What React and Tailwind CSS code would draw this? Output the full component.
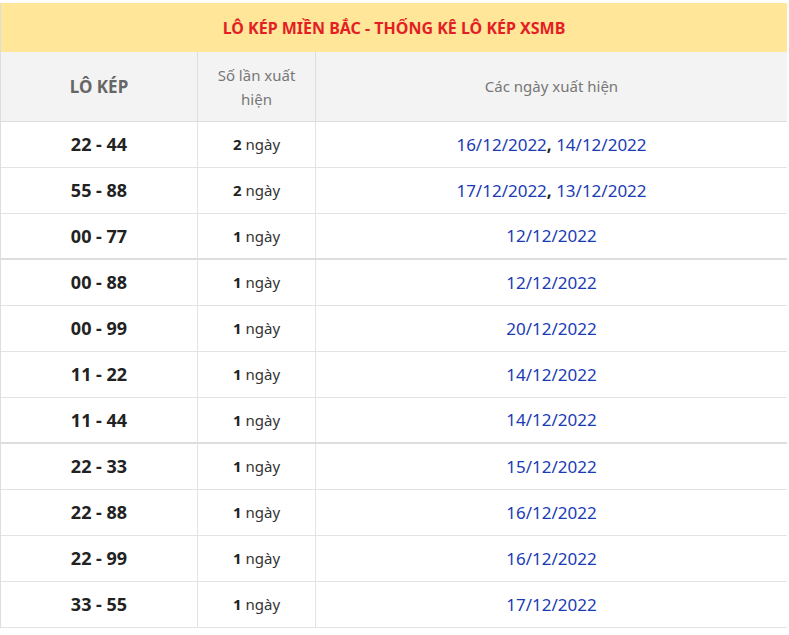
const ROWS = [
  ['22 - 44', 2, ['16/12/2022', '14/12/2022']],
  ['55 - 88', 2, ['17/12/2022', '13/12/2022']],
  ['00 - 77', 1, ['12/12/2022']],
  ['00 - 88', 1, ['12/12/2022']],
  ['00 - 99', 1, ['20/12/2022']],
  ['11 - 22', 1, ['14/12/2022']],
  ['11 - 44', 1, ['14/12/2022']],
  ['22 - 33', 1, ['15/12/2022']],
  ['22 - 88', 1, ['16/12/2022']],
  ['22 - 99', 1, ['16/12/2022']],
  ['33 - 55', 1, ['17/12/2022']],
]

export default function App() {
  return (
    <div className="w-[789px] h-[635px] bg-white pt-[3px] font-['Liberation_Sans',Arial,sans-serif] overflow-hidden">
      <div className="w-[787px] border-l border-[#ddd]">
        <div className="h-[49px] bg-[#ffe699] flex items-center justify-center text-[16px] font-bold text-[#e31e24]">
          LÔ KÉP MIỀN BẮC - THỐNG KÊ LÔ KÉP XSMB
        </div>
        <div className="flex h-[70px] bg-[#f3f3f3] border-b border-[#ddd]">
          <div className="w-[196px] flex items-center justify-center text-[17px] font-bold text-[#666]">LÔ KÉP</div>
          <div className="w-[118px] border-l border-[#ddd] flex items-center justify-center text-center text-[15px] leading-[24px] text-[#777] px-3">Số lần xuất hiện</div>
          <div className="flex-1 border-l border-[#ddd] flex items-center justify-center text-[15px] text-[#777]">Các ngày xuất hiện</div>
        </div>
        {ROWS.map(([pair, n, dates], i) => (
          <div key={pair} className={`flex h-[46px] border-b ${i === 2 || i === 6 ? 'border-b-2 border-[#ddd]' : 'border-[#e3e3e3]'}`}>
            <div className="w-[196px] flex items-center justify-center text-[18px] font-bold text-[#222]">{pair}</div>
            <div className="w-[118px] border-l border-[#e3e3e3] flex items-center justify-center text-[15px] text-[#333]">
              <b className="mr-1 text-[#222]">{n}</b>ngày
            </div>
            <div className="flex-1 border-l border-[#e3e3e3] flex items-center justify-center text-[17px] text-[#1a3bb3]">
              {dates.map((d, j) => (
                <span key={d}>{j > 0 && <b className="text-[#222]">, </b>}{d}</span>
              ))}
            </div>
          </div>
        ))}
      </div>
    </div>
  )
}
